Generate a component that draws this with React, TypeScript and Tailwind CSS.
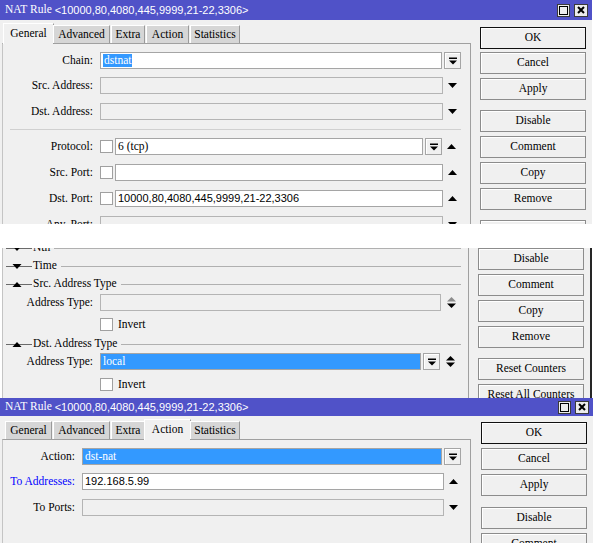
import React from "react";

const SANS = "[font-family:Liberation_Sans,Arial,sans-serif]";

function DownTri() {
  return (
    <svg width="9" height="5" viewBox="0 0 9 5">
      <polygon points="0,0 9,0 4.5,5" fill="#000" />
    </svg>
  );
}
function UpTri() {
  return (
    <svg width="9" height="5" viewBox="0 0 9 5">
      <polygon points="0,5 9,5 4.5,0" fill="#000" />
    </svg>
  );
}
function UpDown({ greyUp }: { greyUp?: boolean }) {
  return (
    <svg width="9" height="11" viewBox="0 0 9 11">
      <polygon points="0,4.5 9,4.5 4.5,0" fill={greyUp ? "#8c8c8c" : "#000"} />
      <polygon points="0,6.5 9,6.5 4.5,11" fill="#000" />
    </svg>
  );
}

function DropBtn() {
  return (
    <div className="w-[17px] h-[17px] bg-[#f0f0f0] border border-[#a5a5a5] shadow-[inset_1px_1px_0_#ffffff] flex items-center justify-center">
      <svg width="8" height="8" viewBox="0 0 8 8">
        <rect x="0" y="0.5" width="8" height="1.5" fill="#000" />
        <polygon points="0,3.5 8,3.5 4,7.5" fill="#000" />
      </svg>
    </div>
  );
}

function IconSlot({ children }: { children?: React.ReactNode }) {
  return <div className="w-[18px] flex items-center justify-center">{children}</div>;
}

type Kind = "white" | "disabled" | "sel";

function Field({
  w,
  kind,
  children,
}: {
  w: string;
  kind: Kind;
  children?: React.ReactNode;
}) {
  const k =
    kind === "white"
      ? "bg-white border-[#a5a5a5]"
      : kind === "disabled"
      ? "bg-[#f0f0f0] border-[#b4b4b4]"
      : "bg-[#3399ff] border-[#a5a5a5] text-white";
  return (
    <div className={`${w} h-[17px] border ${k} flex items-center overflow-hidden whitespace-nowrap`}>
      {children}
    </div>
  );
}

function Val({ children, sans }: { children: React.ReactNode; sans?: boolean }) {
  return (
    <span className={`pl-[2px] leading-none ${sans ? `${SANS} text-[11px]` : "text-[11.5px]"}`}>
      {children}
    </span>
  );
}

function Check() {
  return <div className="w-[13px] h-[13px] bg-white border border-[#a0a0a0] shrink-0" />;
}

function Row({
  label,
  labelW,
  blue,
  children,
}: {
  label: string;
  labelW: string;
  blue?: boolean;
  children?: React.ReactNode;
}) {
  return (
    <div className="flex items-center h-[17px]">
      <div
        className={`${labelW} text-right text-[11.5px] leading-none whitespace-nowrap ${
          blue ? "text-[#0000ff]" : "text-black"
        }`}
      >
        {label}
      </div>
      <div className="ml-[7px] flex items-center">{children}</div>
    </div>
  );
}

function Btn({
  children,
  def,
  className = "",
}: {
  children: React.ReactNode;
  def?: boolean;
  className?: string;
}) {
  return (
    <div
      className={`h-[22px] w-[106px] shrink-0 flex items-center justify-center bg-[#f0f0f0] border ${
        def ? "border-[#101010]" : "border-[#8c8c8c]"
      } shadow-[inset_1px_1px_0_#ffffff] text-[11.5px] leading-none whitespace-nowrap ${className}`}
    >
      {children}
    </div>
  );
}

function TitleBar({ h, w }: { h: string; w: string }) {
  return (
    <div className={`${h} ${w} bg-[#5052c8] flex items-center text-white pl-[5px] pr-[4px] shrink-0`}>
      <span className="text-[11.5px] leading-none whitespace-pre">NAT Rule </span>
      <span className={`${SANS} text-[11px] leading-none whitespace-nowrap`}>
        &lt;10000,80,4080,445,9999,21-22,3306&gt;
      </span>
      <div className="ml-auto flex items-center gap-[4px]">
        <div className="w-[13px] h-[13px] bg-[#ececec] border border-[#3a3a3a] flex items-center justify-center">
          <svg width="9" height="9" viewBox="0 0 9 9">
            <rect x="0.5" y="0.5" width="8" height="8" fill="none" stroke="#000" strokeWidth="1" />
          </svg>
        </div>
        <div className="w-[14px] h-[13px] bg-[#ececec] border border-[#3a3a3a] flex items-center justify-center">
          <svg width="8" height="8" viewBox="0 0 8 8">
            <path d="M1 1 L7 7 M7 1 L1 7" stroke="#000" strokeWidth="2" />
          </svg>
        </div>
      </div>
    </div>
  );
}

function Tabs({ active }: { active: string }) {
  const tabs: [string, string, string][] = [
    ["General", "w-[47px]", "w-[51px]"],
    ["Advanced", "w-[57px]", "w-[61px]"],
    ["Extra", "w-[34px]", "w-[38px]"],
    ["Action", "w-[43px]", "w-[47px]"],
    ["Statistics", "w-[50px]", "w-[54px]"],
  ];
  return (
    <div className="h-[21px] flex items-end pl-[5px] gap-[1px] relative z-10">
      {tabs.map(([name, w, wSel]) =>
        name === active ? (
          <div
            key={name}
            className={`${wSel} -mx-[2px] h-[21px] bg-[#f0f0f0] border-t border-l border-r border-t-white border-l-white border-r-[#9a9a9a] flex items-start justify-center pt-[4px] text-[11.5px] leading-none`}
          >
            {name}
          </div>
        ) : (
          <div
            key={name}
            className={`${w} h-[18px] mb-[1px] bg-[#d6d6d6] border-t border-l border-r border-t-white border-l-white border-r-[#9a9a9a] flex items-center justify-center text-[11.5px] leading-none`}
          >
            {name}
          </div>
        )
      )}
    </div>
  );
}

function Section({ label, open }: { label: string; open?: boolean }) {
  return (
    <div className="flex items-center h-[18px] pl-[3px] shrink-0">
      <svg width="26" height="9" viewBox="0 0 26 9" className="shrink-0">
        <line x1="0" y1="4.5" x2="26" y2="4.5" stroke="#6a6a6a" strokeWidth="1" />
        <polygon points={open ? "6.5,7 15.5,7 11,2" : "6.5,2 15.5,2 11,7"} fill="#000" />
      </svg>
      <span className="ml-[1px] text-[11.5px] leading-none whitespace-nowrap">{label}</span>
      <div className="flex-1 h-px bg-[#b0b0b0] ml-[4px] mr-[7px]" />
    </div>
  );
}

function Panel1() {
  return (
    <div className="h-[224px] overflow-hidden flex shrink-0">
      <div className="w-[592px] bg-[#f0f0f0] flex flex-col">
        <TitleBar h="h-[20px]" w="w-[592px]" />
        <div className="flex flex-1">
          <div className="w-[471px] flex flex-col pt-[3px]">
            <Tabs active="General" />
            <div className="ml-[2px] w-[469px] -mt-[1px] flex-1 border-l border-t border-r border-l-[#c4c4c4] border-t-[#a0a0a0] border-r-[#a0a0a0] flex flex-col">
              <div className="mt-[8px]">
                <Row label="Chain:" labelW="w-[90px]">
                  <Field w="w-[342px]" kind="white">
                    <span className="ml-[2px] px-[1px] bg-[#3399ff] text-white text-[11.5px] leading-[13px]">dstnat</span>
                  </Field>
                  <div className="ml-[2px]">
                    <DropBtn />
                  </div>
                </Row>
              </div>
              <div className="mt-[8px]">
                <Row label="Src. Address:" labelW="w-[90px]">
                  <Field w="w-[343px]" kind="disabled" />
                  <IconSlot>
                    <DownTri />
                  </IconSlot>
                </Row>
              </div>
              <div className="mt-[9px]">
                <Row label="Dst. Address:" labelW="w-[90px]">
                  <Field w="w-[343px]" kind="disabled" />
                  <IconSlot>
                    <DownTri />
                  </IconSlot>
                </Row>
              </div>
              <div className="mt-[9px] ml-[7px] w-[451px] h-px bg-[#d0d0d0]" />
              <div className="mt-[8px]">
                <Row label="Protocol:" labelW="w-[90px]">
                  <Check />
                  <div className="ml-[2px]">
                    <Field w="w-[308px]" kind="white">
                      <Val>6 (tcp)</Val>
                    </Field>
                  </div>
                  <div className="ml-[2px]">
                    <DropBtn />
                  </div>
                  <IconSlot>
                    <UpTri />
                  </IconSlot>
                </Row>
              </div>
              <div className="mt-[9px]">
                <Row label="Src. Port:" labelW="w-[90px]">
                  <Check />
                  <div className="ml-[2px]">
                    <Field w="w-[328px]" kind="white" />
                  </div>
                  <IconSlot>
                    <UpTri />
                  </IconSlot>
                </Row>
              </div>
              <div className="mt-[9px]">
                <Row label="Dst. Port:" labelW="w-[90px]">
                  <Check />
                  <div className="ml-[2px]">
                    <Field w="w-[328px]" kind="white">
                      <Val sans>10000,80,4080,445,9999,21-22,3306</Val>
                    </Field>
                  </div>
                  <IconSlot>
                    <UpTri />
                  </IconSlot>
                </Row>
              </div>
              <div className="mt-[9px]">
                <Row label="Any. Port:" labelW="w-[90px]">
                  <Field w="w-[343px]" kind="disabled" />
                  <IconSlot>
                    <DownTri />
                  </IconSlot>
                </Row>
              </div>
            </div>
          </div>
          <div className="flex flex-col pl-[9px] pt-[7px]">
            <Btn def>OK</Btn>
            <Btn className="mt-[3px]">Cancel</Btn>
            <Btn className="mt-[4px]">Apply</Btn>
            <Btn className="mt-[10px]">Disable</Btn>
            <Btn className="mt-[4px]">Comment</Btn>
            <Btn className="mt-[4px]">Copy</Btn>
            <Btn className="mt-[4px]">Remove</Btn>
            <Btn className="mt-[10px]">Reset Counters</Btn>
          </div>
        </div>
      </div>
      <div className="flex-1 bg-white" />
    </div>
  );
}

function Panel2() {
  return (
    <div className="h-[150px] overflow-hidden flex shrink-0">
      <div className="w-[2px] bg-white" />
      <div className="w-[588px] bg-[#f0f0f0] flex">
        <div className="w-[467px] border-l border-r border-l-[#c4c4c4] border-r-[#a0a0a0] flex flex-col">
          <div className="-mt-[9px]">
            <Section label="Nth" />
          </div>
          <Section label="Time" />
          <Section label="Src. Address Type" open />
          <div className="mt-[1px]">
            <Row label="Address Type:" labelW="w-[90px]">
              <Field w="w-[341px]" kind="disabled" />
              <div className="w-[20px] flex items-center justify-center">
                <UpDown greyUp />
              </div>
            </Row>
          </div>
          <div className="mt-[7px] flex items-center h-[13px]">
            <div className="w-[97px]" />
            <Check />
            <span className="ml-[5px] text-[11.5px] leading-none">Invert</span>
          </div>
          <div className="mt-[4px]">
            <Section label="Dst. Address Type" open />
          </div>
          <Row label="Address Type:" labelW="w-[90px]">
            <Field w="w-[321px]" kind="sel">
              <Val>local</Val>
            </Field>
            <div className="ml-[2px]">
              <DropBtn />
            </div>
            <div className="w-[20px] flex items-center justify-center">
              <UpDown />
            </div>
          </Row>
          <div className="mt-[8px] flex items-center h-[13px]">
            <div className="w-[97px]" />
            <Check />
            <span className="ml-[5px] text-[11.5px] leading-none">Invert</span>
          </div>
          <div className="mt-[3px]">
            <Section label="PSD" />
          </div>
        </div>
        <div className="flex flex-col pl-[9px]">
          <Btn>Disable</Btn>
          <Btn className="mt-[4px]">Comment</Btn>
          <Btn className="mt-[4px]">Copy</Btn>
          <Btn className="mt-[4px]">Remove</Btn>
          <Btn className="mt-[10px]">Reset Counters</Btn>
          <Btn className="mt-[4px]">Reset All Counters</Btn>
        </div>
      </div>
      <div className="w-[2px] bg-[#262626]" />
      <div className="flex-1 bg-white" />
    </div>
  );
}

function Panel3() {
  return (
    <div className="h-[145px] overflow-hidden flex shrink-0">
      <div className="w-[593px] bg-[#f0f0f0] flex flex-col">
        <TitleBar h="h-[18px]" w="w-[593px]" />
        <div className="flex flex-1">
          <div className="w-[471px] flex flex-col pt-[3px]">
            <Tabs active="Action" />
            <div className="ml-[2px] w-[469px] -mt-[1px] flex-1 border-l border-t border-r border-l-[#c4c4c4] border-t-[#a0a0a0] border-r-[#a0a0a0] flex flex-col">
              <div className="mt-[8px]">
                <Row label="Action:" labelW="w-[72px]">
                  <Field w="w-[360px]" kind="sel">
                    <Val>dst-nat</Val>
                  </Field>
                  <div className="ml-[2px]">
                    <DropBtn />
                  </div>
                </Row>
              </div>
              <div className="mt-[8px]">
                <Row label="To Addresses:" labelW="w-[72px]" blue>
                  <Field w="w-[362px]" kind="white">
                    <Val sans>192.168.5.99</Val>
                  </Field>
                  <IconSlot>
                    <UpTri />
                  </IconSlot>
                </Row>
              </div>
              <div className="mt-[9px]">
                <Row label="To Ports:" labelW="w-[72px]">
                  <Field w="w-[362px]" kind="disabled" />
                  <IconSlot>
                    <DownTri />
                  </IconSlot>
                </Row>
              </div>
            </div>
          </div>
          <div className="flex flex-col pl-[10px] pt-[6px]">
            <Btn def>OK</Btn>
            <Btn className="mt-[4px]">Cancel</Btn>
            <Btn className="mt-[4px]">Apply</Btn>
            <Btn className="mt-[11px]">Disable</Btn>
            <Btn className="mt-[4px]">Comment</Btn>
          </div>
        </div>
      </div>
      <div className="flex-1 bg-white" />
    </div>
  );
}

export default function App() {
  return (
    <div className="w-[595px] h-[543px] bg-white overflow-hidden flex flex-col [font-family:Liberation_Serif,Times_New_Roman,serif] text-black">
      <Panel1 />
      <div className="h-[24px] bg-white shrink-0" />
      <Panel2 />
      <Panel3 />
    </div>
  );
}
